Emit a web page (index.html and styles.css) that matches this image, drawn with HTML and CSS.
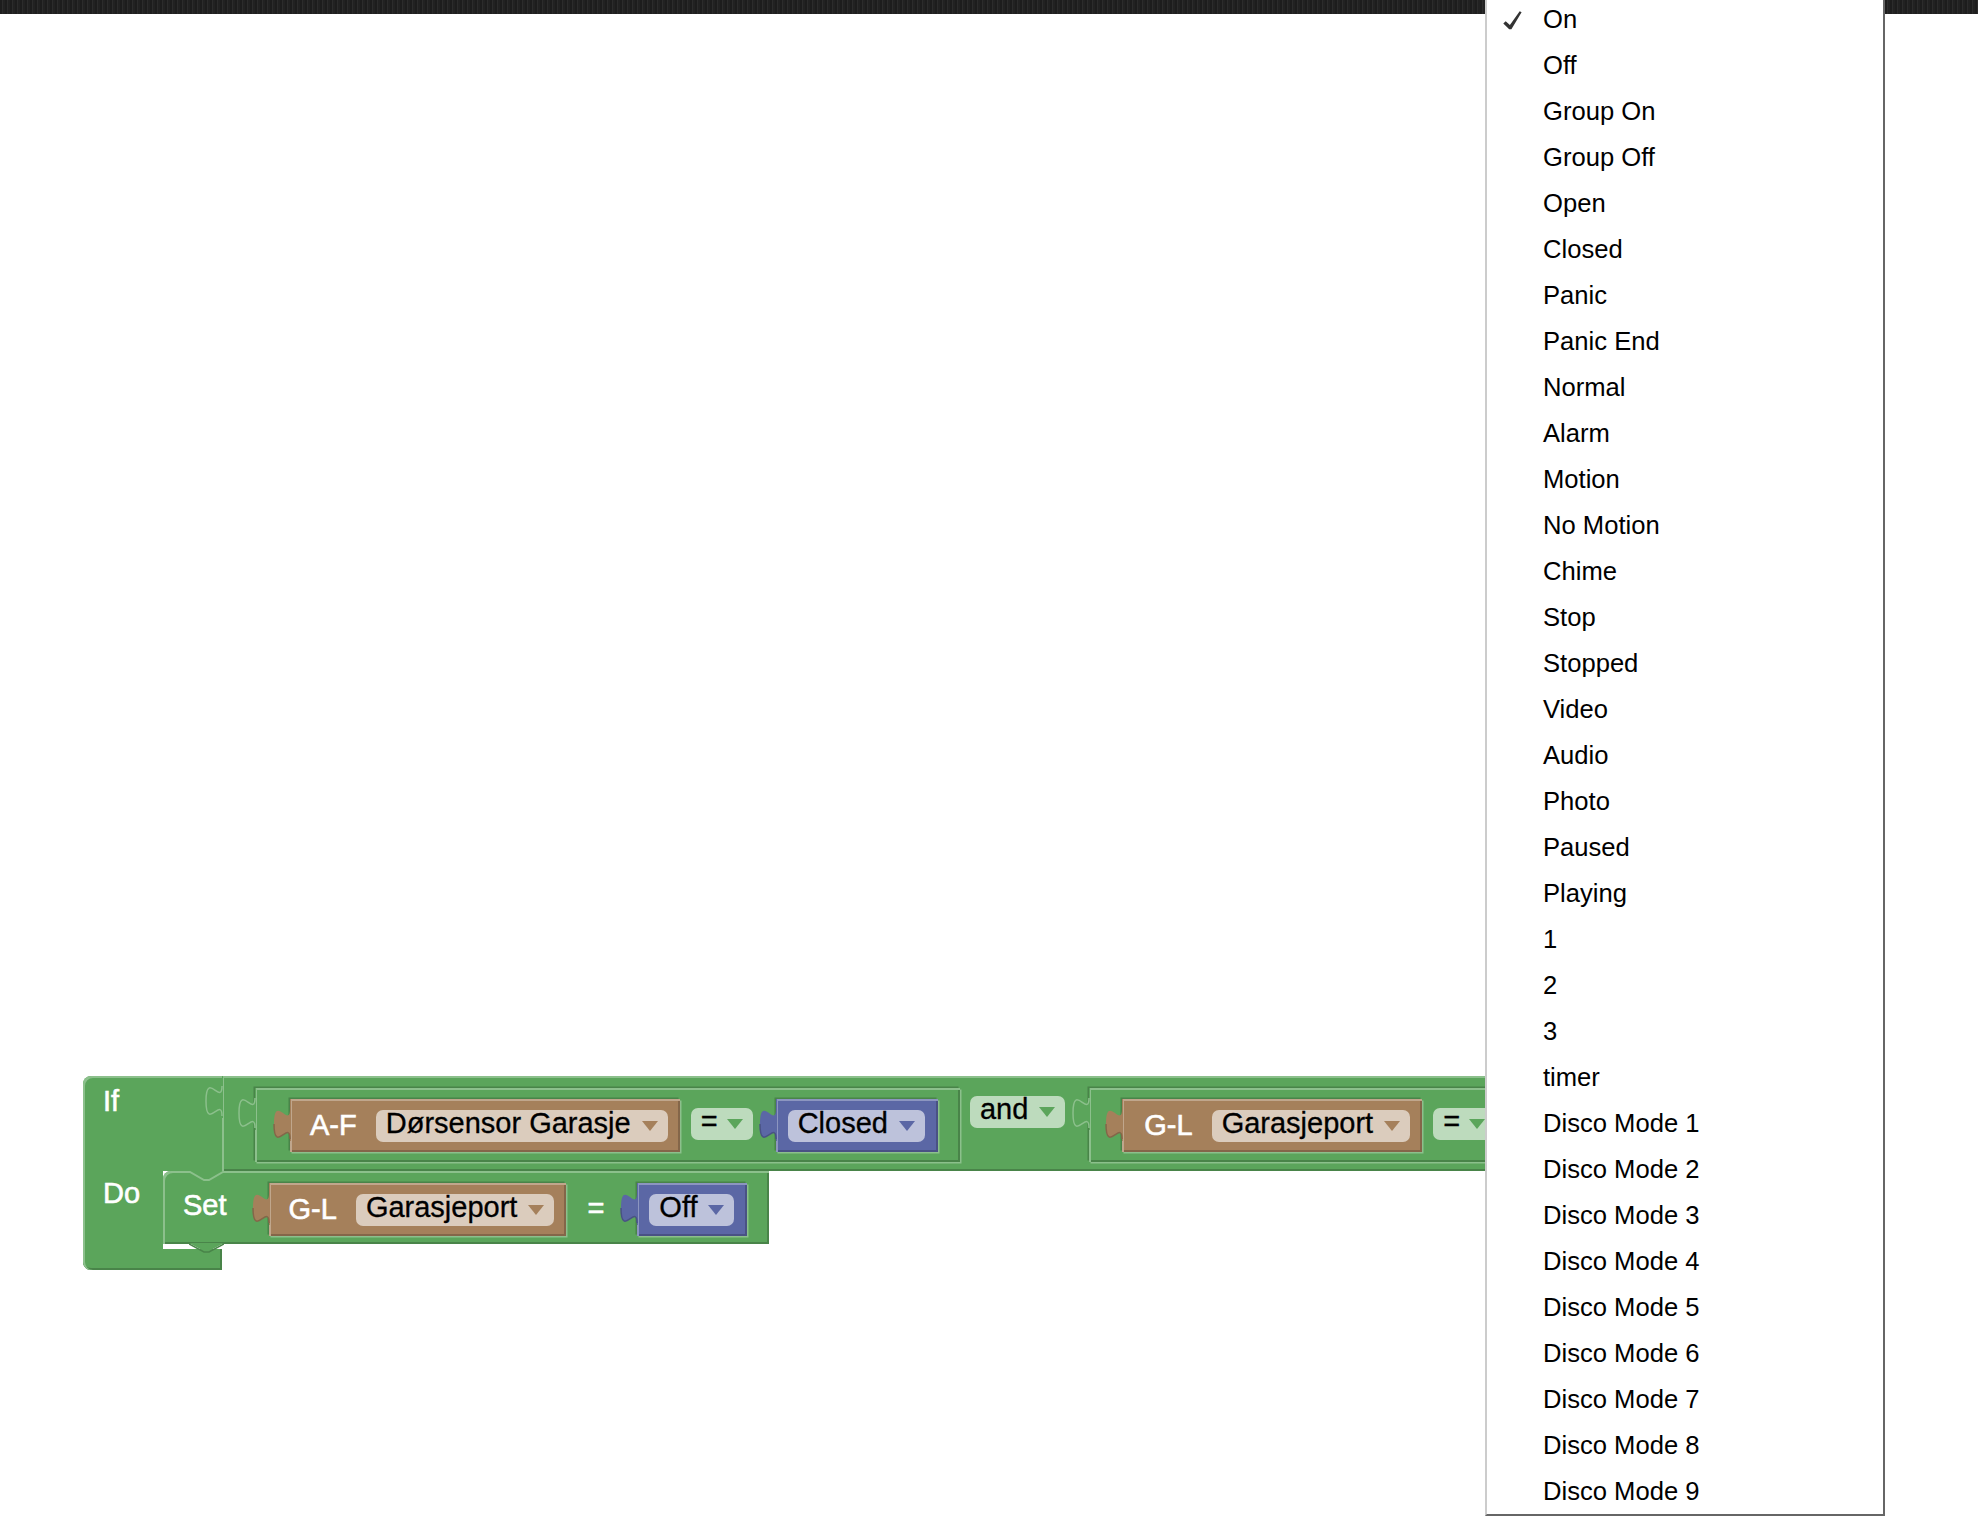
FILE: index.html
```html
<!DOCTYPE html>
<html>
<head>
<meta charset="utf-8">
<title>Blockly rule editor</title>
<link rel="stylesheet" href="styles.css">
</head>
<body>
<div class="topbar"></div>
<div class="workspace">
  <div class="blk-if">
    <div class="if-row1">
      <div class="if-col"><span class="lbl">If</span></div>
      <div class="vb logic andb">
        <svg class="tab tab-g" viewBox="0 0 18 42" width="18" height="42"><path class="tf" d="M18,0 H17 V10 C17,30 1,-6 1,25 C1,56 17,20 17,40 V42 H18 Z"/><path class="ts" d="M17,10 C17,30 1,-6 1,25 C1,56 17,20 17,40"/></svg>
        <div class="vb logic-in cmp">
          <svg class="tab tab-g" viewBox="0 0 18 42" width="18" height="42"><path class="tf" d="M18,0 H17 V10 C17,30 1,-6 1,25 C1,56 17,20 17,40 V42 H18 Z"/><path class="ts" d="M17,10 C17,30 1,-6 1,25 C1,56 17,20 17,40"/></svg>
          <div class="vb dev">
            <svg class="tab tab-b" viewBox="0 0 18 42" width="18" height="42"><path class="tf" d="M18,0 H17 V10 C17,30 1,-6 1,25 C1,56 17,20 17,40 V42 H18 Z"/><path class="ts" d="M1,25 C1,56 17,20 17,40"/></svg>
            <span class="lbl dlbl">A-F</span>
            <span class="fld fld-dev"><span class="ft">Dørsensor Garasje</span><i class="arr"></i></span>
          </div>
          <span class="fld fld-logic eqf"><span class="ft">=</span><i class="arr"></i></span>
          <div class="vb val">
            <svg class="tab tab-v" viewBox="0 0 18 42" width="18" height="42"><path class="tf" d="M18,0 H17 V10 C17,30 1,-6 1,25 C1,56 17,20 17,40 V42 H18 Z"/><path class="ts" d="M1,25 C1,56 17,20 17,40"/></svg>
            <span class="fld fld-val"><span class="ft">Closed</span><i class="arr"></i></span>
          </div>
        </div>
        <span class="fld fld-logic andf"><span class="ft">and</span><i class="arr"></i></span>
        <div class="vb logic-in cmp cmp2">
          <svg class="tab tab-g" viewBox="0 0 18 42" width="18" height="42"><path class="tf" d="M18,0 H17 V10 C17,30 1,-6 1,25 C1,56 17,20 17,40 V42 H18 Z"/><path class="ts" d="M17,10 C17,30 1,-6 1,25 C1,56 17,20 17,40"/></svg>
          <div class="vb dev dev2">
            <svg class="tab tab-b" viewBox="0 0 18 42" width="18" height="42"><path class="tf" d="M18,0 H17 V10 C17,30 1,-6 1,25 C1,56 17,20 17,40 V42 H18 Z"/><path class="ts" d="M1,25 C1,56 17,20 17,40"/></svg>
            <span class="lbl dlbl">G-L</span>
            <span class="fld fld-dev"><span class="ft">Garasjeport</span><i class="arr"></i></span>
          </div>
          <span class="fld fld-logic eqf"><span class="ft">=</span><i class="arr"></i></span>
        </div>
      </div>
    </div>
    <div class="if-row2">
      <div class="do-col"><span class="lbl">Do</span></div>
      <div class="stmt">
        <div class="set-blk">
          <svg class="set-notch" viewBox="0 0 37 10" width="37" height="10"><rect x="0" y="0" width="37" height="3" class="nf"/><path class="nl" d="M0,1 H2 L16,9 H21 L35,1 H37"/></svg>
          <span class="lbl set-lbl">Set</span>
          <div class="vb dev dev-set">
            <svg class="tab tab-b" viewBox="0 0 18 42" width="18" height="42"><path class="tf" d="M18,0 H17 V10 C17,30 1,-6 1,25 C1,56 17,20 17,40 V42 H18 Z"/><path class="ts" d="M1,25 C1,56 17,20 17,40"/></svg>
            <span class="lbl dlbl">G-L</span>
            <span class="fld fld-dev"><span class="ft">Garasjeport</span><i class="arr"></i></span>
          </div>
          <span class="lbl eq-lbl">=</span>
          <div class="vb val val-set">
            <svg class="tab tab-v" viewBox="0 0 18 42" width="18" height="42"><path class="tf" d="M18,0 H17 V10 C17,30 1,-6 1,25 C1,56 17,20 17,40 V42 H18 Z"/><path class="ts" d="M1,25 C1,56 17,20 17,40"/></svg>
            <span class="fld fld-val"><span class="ft">Off</span><i class="arr"></i></span>
          </div>
          <svg class="set-next" viewBox="0 0 35 10" width="35" height="10"><path class="xf" d="M0,0 L15,8 H20 L35,0 Z"/><path class="xl" d="M0,1 L15,9 H20 L35,1"/></svg>
        </div>
      </div>
    </div>
    <div class="if-row3"></div>
  </div>
</div>

<div class="menu">
  <div class="mi">
    <svg class="check" viewBox="0 0 19 19" width="19" height="19"><path d="M0.3,12.4 L2.7,10.3 L6.9,13.9 L16.7,0.2 L18.6,1.2 L8.4,18.2 L6.2,18.2 Z"/></svg>
    On
  </div>
  <div class="mi">Off</div>
  <div class="mi">Group On</div>
  <div class="mi">Group Off</div>
  <div class="mi">Open</div>
  <div class="mi">Closed</div>
  <div class="mi">Panic</div>
  <div class="mi">Panic End</div>
  <div class="mi">Normal</div>
  <div class="mi">Alarm</div>
  <div class="mi">Motion</div>
  <div class="mi">No Motion</div>
  <div class="mi">Chime</div>
  <div class="mi">Stop</div>
  <div class="mi">Stopped</div>
  <div class="mi">Video</div>
  <div class="mi">Audio</div>
  <div class="mi">Photo</div>
  <div class="mi">Paused</div>
  <div class="mi">Playing</div>
  <div class="mi">1</div>
  <div class="mi">2</div>
  <div class="mi">3</div>
  <div class="mi">timer</div>
  <div class="mi">Disco Mode 1</div>
  <div class="mi">Disco Mode 2</div>
  <div class="mi">Disco Mode 3</div>
  <div class="mi">Disco Mode 4</div>
  <div class="mi">Disco Mode 5</div>
  <div class="mi">Disco Mode 6</div>
  <div class="mi">Disco Mode 7</div>
  <div class="mi">Disco Mode 8</div>
  <div class="mi">Disco Mode 9</div>
</div>
</body>
</html>
```

FILE: styles.css
```css
:root {
  --g: #5ba55b;
  --gl: #8cc08c;
  --gd: #498449;
  --b: #a5805b;
  --bl: #c0a68c;
  --bd: #846649;
  --v: #5b67a5;
  --vl: #8c95c0;
  --vd: #495284;
}

html, body {
  margin: 0;
  padding: 0;
  background: #ffffff;
}

body {
  width: 1978px;
  height: 1536px;
  overflow: hidden;
  position: relative;
  font-family: "Liberation Sans", Arial, Helvetica, sans-serif;
}

.topbar {
  height: 14px;
  background: repeating-linear-gradient(90deg, #1d1d1d 0 2px, #2c2c2c 2px 3px, #222222 3px 5px);
}

.workspace {
  position: relative;
  height: 1522px;
}

/* ---------- If block (placed on the free workspace canvas) ---------- */
.blk-if {
  position: absolute;
  left: 83px;
  top: 1062px;
  display: flex;
  flex-direction: column;
  align-items: flex-start;
}

.if-row1 {
  display: flex;
  align-items: stretch;
}

.if-col {
  width: 139px;
  box-sizing: border-box;
  padding: 12px 0 0 20px;
  background: var(--g);
  border-top-left-radius: 8px;
  box-shadow: inset 2px 2px 0 var(--gl);
}

.if-row2 {
  display: flex;
  align-items: flex-start;
}

.do-col {
  width: 80px;
  height: 78px;
  box-sizing: border-box;
  padding: 9px 0 0 20px;
  background: var(--g);
  box-shadow: inset 2px 0 0 var(--gl);
}

.stmt {
  display: flex;
  flex-direction: column;
  align-items: flex-start;
}

.if-row3 {
  width: 139px;
  height: 21px;
  background: var(--g);
  border-bottom-left-radius: 8px;
  box-shadow: inset 2px 0 0 var(--gl), inset 0 -2px 0 var(--gd), inset -2px 0 0 var(--gd);
}

/* ---------- text ---------- */
.lbl {
  color: #ffffff;
  font-size: 29px;
  line-height: 26px;
  white-space: nowrap;
  -webkit-text-stroke: 0.6px #ffffff;
}

.ft {
  color: #000000;
  font-size: 29px;
  line-height: 26px;
  white-space: nowrap;
  align-self: flex-start;
  -webkit-text-stroke: 0.3px #000000;
}

/* ---------- value blocks ---------- */
.vb {
  position: relative;
  display: flex;
  align-items: flex-start;
}

.tab {
  position: absolute;
  left: -17px;
  top: 0;
  overflow: visible;
}

.tab .ts {
  fill: none;
  stroke-width: 1.5;
}

.tab-g .tf { fill: var(--g); }
.tab-g .ts { stroke: var(--gl); }
.tab-b .tf { fill: var(--b); }
.tab-b .ts { stroke: var(--bd); }
.tab-v .tf { fill: var(--v); }
.tab-v .ts { stroke: var(--vd); }

.andb {
  background: var(--g);
  padding: 12px 40px 9px 33px;
  box-shadow: inset 0 2px 0 var(--gl), inset 2px 0 0 var(--gl), inset 0 -2px 0 var(--gd), inset -2px 0 0 var(--gd);
}

.cmp {
  background: var(--g);
  padding: 11px 22px 10px 35px;
  box-shadow: inset 0 2px 0 var(--gl), inset 2px 0 0 var(--gl), inset 0 -2px 0 var(--gd), inset -2px 0 0 var(--gd),
              -1.5px -1.5px 0 var(--gd), 1.5px 1.5px 0 var(--gl);
}

.cmp2 {
  margin-left: 24px;
  padding-left: 33px;
  padding-right: 140px;
}

.dev {
  background: var(--b);
  padding: 11px 12px 10px 20px;
  box-shadow: inset 0 2px 0 var(--bl), inset 2px 0 0 var(--bl), inset 0 -2px 0 var(--bd), inset -2px 0 0 var(--bd),
              -1.5px -1.5px 0 var(--gd), 1.5px 1.5px 0 var(--gl);
}

.dev2 {
  padding-left: 22px;
}

.dlbl {
  margin-top: 2px;
  margin-right: 19px;
}

.val {
  background: var(--v);
  margin-left: 23px;
  padding: 11px 13px 10px 12px;
  box-shadow: inset 0 2px 0 var(--vl), inset 2px 0 0 var(--vl), inset 0 -2px 0 var(--vd), inset -2px 0 0 var(--vd),
              -1.5px -1.5px 0 var(--gd), 1.5px 1.5px 0 var(--gl);
}

/* ---------- dropdown fields ---------- */
.fld {
  display: inline-flex;
  align-items: center;
  gap: 11px;
  height: 32px;
  padding: 0 10px;
  border-radius: 7px;
}

.arr {
  display: block;
  width: 0;
  height: 0;
  border-left: 8.5px solid transparent;
  border-right: 8.5px solid transparent;
  border-top: 10px solid;
}

.fld-dev { background: #dbccbd; }
.fld-dev .arr { border-top-color: var(--b); }
.fld-logic { background: #bddbbd; }
.fld-logic .arr { border-top-color: var(--g); }
.fld-val { background: #bdc2db; }
.fld-val .arr { border-top-color: var(--v); }

.eqf {
  gap: 9px;
  margin-left: 11px;
  margin-top: 9px;
}

.andf {
  margin-left: 10px;
  margin-top: 8px;
}

/* ---------- Set statement block ---------- */
.set-blk {
  position: relative;
  display: flex;
  align-items: flex-start;
  height: 73px;
  box-sizing: border-box;
  padding: 0 22px 0 20px;
  background: var(--g);
  border-top-left-radius: 8px;
  box-shadow: inset 2px 2px 0 var(--gl), inset 0 -2px 0 var(--gd), inset -2px 0 0 var(--gd);
}

.set-notch {
  position: absolute;
  left: 25px;
  top: 0;
}

.set-notch .nf { fill: var(--g); }
.set-notch .nl { fill: none; stroke: var(--gl); stroke-width: 2; }

.set-next {
  position: absolute;
  left: 26px;
  top: 72px;
}

.set-next .xf { fill: var(--g); }
.set-next .xl { fill: none; stroke: var(--gd); stroke-width: 1.5; }

.set-lbl {
  margin-top: 21px;
}

.dev-set {
  margin-left: 42px;
  margin-top: 12px;
}

.eq-lbl {
  margin-left: 21px;
  margin-top: 24px;
}

.val-set {
  margin-left: 33px;
  margin-top: 12px;
}

/* ---------- dropdown menu (overlay) ---------- */
.menu {
  position: absolute;
  left: 1485px;
  top: -4px;
  width: 396px;
  background: #ffffff;
  border-left: 2px solid #cccccc;
  border-right: 2px solid #666666;
  border-bottom: 2px solid #666666;
  z-index: 10;
}

.mi {
  position: relative;
  height: 46px;
  line-height: 46px;
  padding-left: 56px;
  font-size: 25.6px;
  color: #000000;
  white-space: nowrap;
}

.check {
  position: absolute;
  left: 16px;
  top: 15px;
}

.check path {
  fill: #333333;
}
```
